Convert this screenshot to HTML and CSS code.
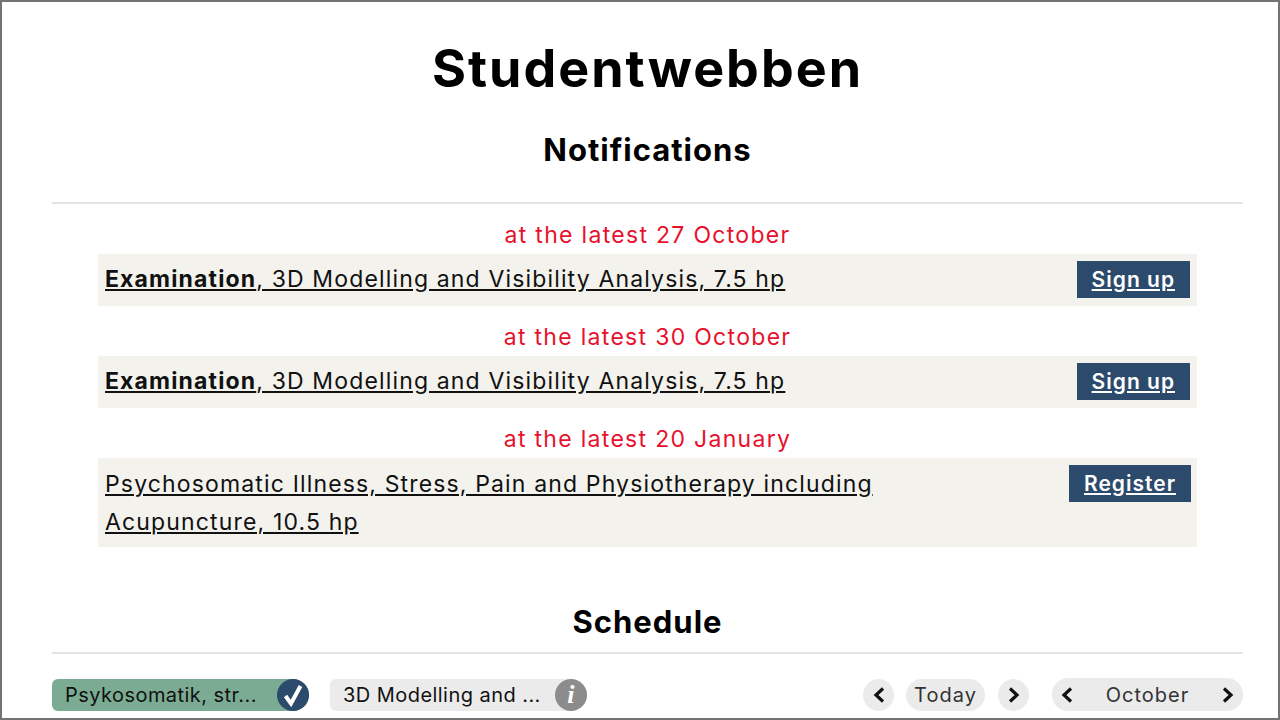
FILE: index.html
```html
<!DOCTYPE html>
<html lang="en">
<head>
  <meta charset="UTF-8" />
  <title>Studentwebben</title>
  <link rel="stylesheet" href="styles.css">
</head>
<body>
  <div class="frame">
    <main class="content">
      <h1>Studentwebben</h1>
      <h2 class="notifTitle">Notifications</h2>

      <section class="notifications">
        <p class="deadline">at the latest 27 October</p>
        <div class="notice">
          <a class="noticeLink" href="#"><b>Examination</b>, 3D Modelling and Visibility Analysis, 7.5 hp</a>
          <a class="action" href="#">Sign up</a>
        </div>

        <p class="deadline">at the latest 30 October</p>
        <div class="notice">
          <a class="noticeLink" href="#"><b>Examination</b>, 3D Modelling and Visibility Analysis, 7.5 hp</a>
          <a class="action" href="#">Sign up</a>
        </div>

        <p class="deadline">at the latest 20 January</p>
        <div class="notice noticeTall">
          <a class="noticeLink" href="#">Psychosomatic Illness, Stress, Pain and Physiotherapy including Acupuncture, 10.5 hp</a>
          <a class="action actionSmall" href="#">Register</a>
        </div>
      </section>

      <h2 class="schedTitle">Schedule</h2>

      <div class="toolbar">
        <div class="courses">
          <div class="course courseGreen">
            <span class="courseName">Psykosomatik, str...</span>
            <span class="badge badgeBlue">
              <svg viewBox="0 0 32 32" width="32" height="32"><path d="M8.5 17 L14 24.5 L23.5 7" fill="none" stroke="#fff" stroke-width="4"/></svg>
            </span>
          </div>
          <div class="course">
            <span class="courseName">3D Modelling and ...</span>
            <span class="badge badgeGrey"><i>i</i></span>
          </div>
        </div>
        <div class="nav">
          <button class="round"><svg viewBox="0 0 14 18" width="14" height="18"><path d="M11 2.5 L4 9 L11 15.5" fill="none" stroke="#111" stroke-width="3.2"/></svg></button>
          <button class="today">Today</button>
          <button class="round"><svg viewBox="0 0 14 18" width="14" height="18"><path d="M3 2.5 L10 9 L3 15.5" fill="none" stroke="#111" stroke-width="3.2"/></svg></button>
          <div class="month">
            <svg viewBox="0 0 14 18" width="14" height="18"><path d="M11 2.5 L4 9 L11 15.5" fill="none" stroke="#111" stroke-width="3.2"/></svg>
            <span>October</span>
            <svg viewBox="0 0 14 18" width="14" height="18"><path d="M3 2.5 L10 9 L3 15.5" fill="none" stroke="#111" stroke-width="3.2"/></svg>
          </div>
        </div>
      </div>
    </main>
  </div>
</body>
</html>
```

FILE: styles.css
```css
html, body {
  margin: 0;
  height: 100%;
  overflow: hidden;
}

body {
  background: #fff;
  color: #111;
  font-family: "Inter", "Liberation Sans", sans-serif;
}

.frame {
  box-sizing: border-box;
  height: 720px;
  border: 2px solid #747474;
  overflow: hidden;
}

.content {
  padding: 0 35px 0 50px;
}

h1 {
  margin: 0;
  padding-top: 37px;
  font-size: 52px;
  line-height: 60px;
  font-weight: 700;
  letter-spacing: 2px;
  text-align: center;
  color: #000;
}

h2 {
  margin: 0;
  font-size: 31px;
  line-height: 38px;
  font-weight: 700;
  letter-spacing: 1px;
  text-align: center;
  color: #000;
}

.notifTitle {
  margin-top: 32px;
  padding-bottom: 33px;
  border-bottom: 2px solid #e4e4e4;
}

.notifications {
  padding: 0 46px;
}

.deadline {
  margin: 0;
  height: 50px;
  line-height: 62px;
  font-size: 23px;
  letter-spacing: 1.3px;
  text-align: center;
  color: #e8112d;
}

.notice {
  display: flex;
  justify-content: space-between;
  align-items: center;
  background: #f3f2ec;
  height: 52px;
  padding: 0 7px;
}

.noticeTall {
  align-items: flex-start;
  height: 89px;
}

.noticeLink {
  color: #111;
  font-size: 23px;
  line-height: 38px;
  letter-spacing: 1.15px;
  margin-bottom: 2px;
}

.noticeTall .noticeLink {
  width: 800px;
  margin-top: 7px;
}

.action {
  background: #2c4a6b;
  color: #fff;
  font-size: 21px;
  font-weight: 600;
  line-height: 37px;
  letter-spacing: 1px;
  padding: 0 15px;
  margin-bottom: 2px;
}

.actionSmall {
  margin: 7px -1px 0 0;
}

.schedTitle {
  margin-top: 56px;
  padding-bottom: 11px;
  border-bottom: 2px solid #e4e4e4;
}

.toolbar {
  display: flex;
  justify-content: space-between;
  align-items: center;
  margin-top: 24px;
}

.courses, .nav {
  display: flex;
  align-items: center;
}

.course {
  display: flex;
  align-items: center;
  justify-content: space-between;
  width: 257px;
  height: 32px;
  margin-right: 21px;
  background: #ebebeb;
  border-radius: 6px 16px 16px 6px;
  font-size: 20px;
  letter-spacing: 0.45px;
  padding-left: 13px;
  box-sizing: border-box;
}

.courseGreen {
  background: #7bab92;
}

.badge {
  display: flex;
  align-items: center;
  justify-content: center;
  width: 32px;
  height: 32px;
  border-radius: 50%;
  color: #fff;
}

.badgeBlue {
  background: #2c4a6b;
}

.badgeGrey {
  background: #8c8c8c;
  font-family: "Liberation Serif", serif;
  font-size: 26px;
  font-weight: 700;
}

.nav {
  align-items: flex-end;
}

.nav button {
  border: 0;
  font: inherit;
  background: #ebebeb;
  color: #333;
  padding: 0;
  height: 32px;
  font-size: 20px;
  letter-spacing: 1px;
}

.round {
  width: 31px;
  border-radius: 50%;
  display: flex;
  align-items: center;
  justify-content: center;
}

.today {
  width: 79px;
  border-radius: 16px;
  margin: 0 13px 0 12px;
}

.month {
  display: flex;
  align-items: center;
  justify-content: space-between;
  box-sizing: border-box;
  width: 191px;
  height: 33px;
  margin-left: 23px;
  padding: 0 8px;
  background: #ebebeb;
  border-radius: 16px;
  font-size: 20px;
  letter-spacing: 1px;
  color: #333;
}
```
